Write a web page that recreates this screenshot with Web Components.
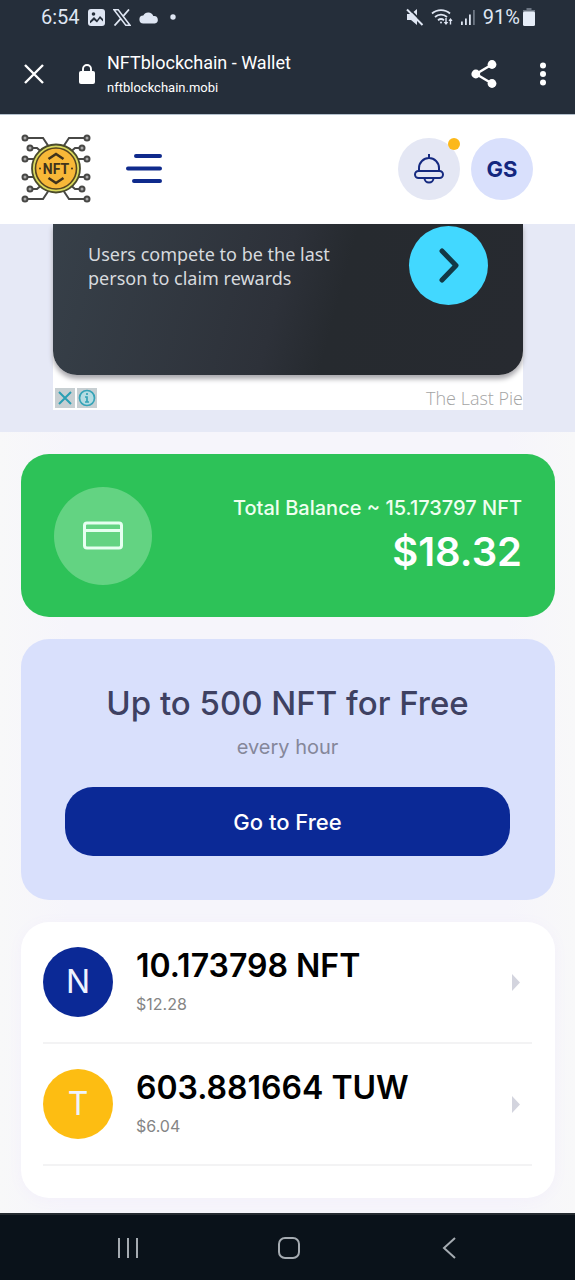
<!DOCTYPE html>
<html lang="en">
<head>
<meta charset="utf-8">
<meta name="viewport" content="width=device-width, initial-scale=1">
<title>NFTblockchain - Wallet</title>
<style>
  html { background: #0a121a; }
  body { margin: 0; font-family: Inter, "Liberation Sans", sans-serif; color: #000; }
</style>
</head>
<body>
<wallet-screen></wallet-screen>
<script>
class BaseElement extends HTMLElement {
  connectedCallback() {
    if (this.shadowRoot) return;
    const root = this.attachShadow({ mode: 'open' });
    root.innerHTML = '<style>*{box-sizing:border-box}svg{display:block;flex:none}button{font:inherit;color:inherit;background:none;border:0;padding:0;margin:0;cursor:pointer}a{color:inherit;text-decoration:none}p,h1,h2,ul{margin:0;padding:0;font-weight:inherit}</style>' + this.view();
  }
}

customElements.define('status-bar', class extends BaseElement {
  view() { return `
    <style>
      :host { display:flex; box-sizing:border-box; align-items:center; height:34px; padding:0 40px 0 41px; background:#252e3a; color:#dfe6f3; font:20px/24px Roboto, sans-serif; }
      .left, .right { display:flex; align-items:center; gap:7px; }
      .left { gap:8px; }
      .right { margin-left:auto; gap:7px; }
      .level { display:flex; align-items:center; gap:3px; }
    </style>
    <div class="left">
      <span>6:54</span>
      <svg width="17" height="17" viewBox="0 0 17 17"><rect width="17" height="17" rx="3" fill="#dfe6f3"/><circle cx="5.500" cy="5" r="1.800" fill="#252e3a"/><path d="M2 12 6 8l3 3 3-4 3 3v4.500H2z" fill="#252e3a"/><path d="M2 14.500 6 11l3 2.500 3-4 3 3v2.500H2z" fill="#dfe6f3"/></svg>
      <svg width="18" height="17" viewBox="0 0 18 17" fill="none" stroke="#dfe6f3"><path d="M1 .8h4.200l11.800 15.400h-4.200z" stroke-width="1.500"/><path d="M16 .5 10 7.300M7.800 9.700 1.500 16.500" stroke-width="1.800"/></svg>
      <svg width="20" height="13" viewBox="0 0 20 13"><path d="M4.500 12.500A4 4 0 0 1 4.300 4.500 5.500 5.500 0 0 1 14.300 5 3.800 3.800 0 0 1 15.700 12.500z" fill="#dfe6f3"/></svg>
      <svg width="12" height="6" viewBox="0 0 12 6"><circle cx="6" cy="3" r="2.700" fill="#dfe6f3"/></svg>
    </div>
    <div class="right">
      <svg width="18" height="18" viewBox="0 0 18 18"><path d="M1 6h4l6-5v16l-6-5H1z" fill="#dfe6f3"/><path d="M3 .5 18 16" stroke="#252e3a" stroke-width="1.800"/><path d="M1 1.500 16.500 17" stroke="#dfe6f3" stroke-width="2"/></svg>
      <svg width="22" height="18" viewBox="0 0 22 18" fill="none" stroke="#dfe6f3" stroke-width="1.800"><path d="M1 5.500a13.500 13.500 0 0 1 18 0M4 9a9 9 0 0 1 12 0M7 12.200a4.800 4.800 0 0 1 6 0"/><circle cx="10" cy="14.500" r="1" fill="#dfe6f3" stroke="none"/><path d="M15 10v6M19.500 16.500V11" stroke-width="1.400"/><path d="m12.700 14 2.300 3 2.300-3zM17.400 13l2.100-3 2.100 3z" fill="#dfe6f3" stroke="none"/></svg>
      <svg width="16" height="18" viewBox="0 0 16 18"><path d="M1 13.500h1.800V17H1zM5 10.500h1.800V17H5zM9 6.500h1.800V17H9z" fill="#dfe6f3"/><path d="M13 2h1.800v15H13z" fill="#6d7683"/></svg>
      <div class="level"><span>91%</span>
      <svg width="12" height="18" viewBox="0 0 12 18"><path d="M3.500 0h5v2H12v3H0V2h3.500z" fill="#6d7683"/><rect y="3.500" width="12" height="14.500" rx="1.500" fill="#e6edf8"/></svg></div>
    </div>`; }
});

customElements.define('browser-bar', class extends BaseElement {
  view() { return `
    <style>
      :host { display:flex; box-sizing:border-box; align-items:center; height:80px; padding:0 24px 0 23px; background:#252e3a; color:#fff; font-family:Roboto, sans-serif; }
      .site { display:flex; align-items:center; gap:12px; margin-left:34px; }
      .title { font-size:18px; line-height:24px; }
      .host { font-size:13px; line-height:26px; }
      .text { padding-top:4px; }
      .actions { display:flex; align-items:center; gap:38px; margin-left:auto; }
    </style>
    <button aria-label="Close"><svg width="22" height="22" viewBox="0 0 22 22"><path d="m2 2 18 18M20 2 2 20" stroke="#fff" stroke-width="2.400"/></svg></button>
    <div class="site">
      <svg width="16" height="20" viewBox="0 0 16 20"><rect y="7" width="16" height="13" rx="2" fill="#fff"/><path d="M4 8V5a4 4 0 0 1 8 0v3" fill="none" stroke="#fff" stroke-width="1.900"/></svg>
      <div class="text"><p class="title">NFTblockchain - Wallet</p><p class="host">nftblockchain.mobi</p></div>
    </div>
    <div class="actions">
      <button aria-label="Share"><svg width="26" height="28" viewBox="0 0 26 28"><path d="M21 4.500 5 14l16 9.500" fill="none" stroke="#fff" stroke-width="2.400"/><g fill="#fff"><circle cx="21" cy="4.500" r="4.400"/><circle cx="4.800" cy="14" r="4.400"/><circle cx="21" cy="23.500" r="4.400"/></g></svg></button>
      <button aria-label="More"><svg width="16" height="24" viewBox="0 0 16 24" fill="#fff"><circle cx="8" cy="3.500" r="3"/><circle cx="8" cy="12" r="3"/><circle cx="8" cy="20.500" r="3"/></svg></button>
    </div>`; }
});

customElements.define('nft-logo', class extends BaseElement {
  view() { return `
    <style>:host{display:block}</style>
    <svg width="70" height="70" viewBox="0 0 70 70" fill="none" role="img" aria-label="NFT">
      <g stroke="#484846" stroke-width="2">
        <path d="M6 4h16l6 9M64 4H48l-6 9M11 14h5l8 7M59 14h-5l-8 7M6 25h10M64 25H54M6 43h10M64 43H54M11 55h5l8-7M59 55h-5l-8-7M6 65h16l6-9M64 65H48l-6-9"/>
        <g fill="#aaa"><circle cx="4" cy="4" r="2.500"/><circle cx="66" cy="4" r="2.500"/><circle cx="9" cy="14" r="2.500"/><circle cx="61" cy="14" r="2.500"/><circle cx="4" cy="25" r="2.500"/><circle cx="66" cy="25" r="2.500"/><circle cx="4" cy="43" r="2.500"/><circle cx="66" cy="43" r="2.500"/><circle cx="9" cy="55" r="2.500"/><circle cx="61" cy="55" r="2.500"/><circle cx="4" cy="65" r="2.500"/><circle cx="66" cy="65" r="2.500"/></g>
      </g>
      <circle cx="35" cy="34.500" r="24" fill="#d9d95c" stroke="#4a4a2c" stroke-width="1.800"/>
      <circle cx="35" cy="34.500" r="20.500" fill="#f8b838" stroke="#57451f" stroke-width="1.600"/>
      <path d="m27.500 25 7.500-5 7.500 5M27.500 44l7.500 5 7.500-5" stroke="#40331c" stroke-width="2.600"/>
      <circle cx="19" cy="34.500" r="1" fill="#40331c"/><circle cx="51" cy="34.500" r="1" fill="#40331c"/>
      <text x="35" y="39.500" text-anchor="middle" font-family="Roboto, sans-serif" font-weight="700" font-size="14" fill="#40331c">NFT</text>
    </svg>`; }
});

customElements.define('app-header', class extends BaseElement {
  view() { return `
    <style>
      :host { display:flex; box-sizing:border-box; align-items:center; height:110px; padding:0 42px 2px 21px; background:#fff; border-top:1px solid #b3c0cc; }
      .menu { margin-left:35px; }
      .actions { display:flex; gap:11px; margin-left:auto; }
      .round { position:relative; display:grid; place-items:center; width:62px; height:62px; border-radius:50%; background:#e4e7f4; }
      .user { background:#d9e0fc; color:#14277f; font-size:22px; line-height:28px; font-weight:700; }
      .badge { position:absolute; top:0; right:0; width:12px; height:12px; border-radius:50%; background:#fcb81a; }
    </style>
    <nft-logo></nft-logo>
    <button class="menu" aria-label="Menu"><svg width="37" height="32" viewBox="0 0 37 32"><path d="M10 3h24M2 15.500h32M8 28h26" stroke="#0f2a8c" stroke-width="4" stroke-linecap="round"/></svg></button>
    <div class="actions">
      <button class="round" aria-label="Notifications"><svg width="30" height="31" viewBox="0 0 30 31" fill="none" stroke="#152a80" stroke-width="2"><path d="M15 1v4M5 18v-3a10 10 0 0 1 20 0v3"/><rect x="1" y="18" width="28" height="7" rx="3.500"/><path d="M10.500 25a4.500 4.500 0 0 0 9 0"/></svg><span class="badge"></span></button>
      <button class="round user">GS</button>
    </div>`; }
});

customElements.define('ad-banner', class extends BaseElement {
  view() { return `
    <style>
      :host { display:block; padding:0 52px 22px 53px; background:#e6e9f6; font-family:"Noto Sans", sans-serif; }
      .frame { background:#fff; }
      .creative { display:flex; justify-content:space-between; height:151px; padding:2px 35px 0 35px; border-radius:0 0 24px 24px; background:linear-gradient(105deg,#374049 0%,#2d3139 48%,#262a2f 60%,#272a30 100%); box-shadow:0 4px 5px #aaa9ae; color:#d7dade; }
      .creative p { width:270px; padding-top:16px; font-size:18px; line-height:24px; }
      .go { display:grid; place-items:center; width:79px; height:79px; border-radius:50%; background:#42d8ff; }
      .foot { display:flex; align-items:center; height:35px; padding:11px 0 0 2px; gap:2px; }
      .foot button { display:grid; place-items:center; width:20px; height:20px; background:#c7cfd2; }
      .brand { margin-left:auto; font:300 18px/22px "Open Sans", sans-serif; color:#a4a4a4; }
    </style>
    <div class="frame">
      <div class="creative"><p>Users compete to be the last person to claim rewards</p>
        <button class="go" aria-label="Open"><svg width="24" height="36" viewBox="0 0 24 36"><path d="m5 3 14 14.500L5 32" fill="none" stroke="#123946" stroke-width="5" stroke-linecap="round" stroke-linejoin="round"/></svg></button></div>
      <div class="foot">
        <button aria-label="Close ad"><svg width="14" height="14" viewBox="0 0 14 14"><path d="m1 1 12 12M13 1 1 13" stroke="#2a9fb4" stroke-width="2"/></svg></button>
        <button aria-label="Ad information"><svg width="18" height="18" viewBox="0 0 18 18" fill="none" stroke="#35a3b7" stroke-width="1.700"><circle cx="9" cy="9" r="7.500" fill="#b5dce2"/><path d="M9 4v2M7 8h2v5M7 13h4"/></svg></button>
        <span class="brand">The Last Pie</span>
      </div>
    </div>`; }
});

customElements.define('balance-card', class extends BaseElement {
  view() { return `
    <style>
      :host { display:flex; box-sizing:border-box; align-items:center; justify-content:space-between; height:163px; padding:0 33px; border-radius:28px; background:#2dc258; color:#fff; }
      .icon { display:grid; place-items:center; width:98px; height:98px; border-radius:50%; background:#63d382; }
      .text { text-align:right; padding-top:4px; }
      .label { font:500 20px/28px Inter, sans-serif; color:#effff0; }
      .total { font:600 40px/60px Inter, sans-serif; }
    </style>
    <div class="icon"><svg width="40" height="30" viewBox="0 0 40 30" fill="none" stroke="#e6fff0" stroke-width="3"><rect x="1.500" y="2" width="37" height="25" rx="2.500"/><path d="M3 9.500h34"/></svg></div>
    <div class="text"><p class="label"><slot name="label"></slot></p><p class="total"><slot></slot></p></div>`; }
});

customElements.define('promo-card', class extends BaseElement {
  view() { return `
    <style>
      :host { display:block; padding:42px 45px 44px 44px; border-radius:28px; background:#d9e0fc; text-align:center; }
      h1 { font:500 33px/44px Inter, sans-serif; color:#3e4162; }
      p { font:400 20px/28px Inter, sans-serif; color:#85879a; padding:8px 0 26px; }
      button { display:block; width:100%; height:69px; border-radius:28px; background:#0b2996; color:#fff; font:500 22px/28px Inter, sans-serif; }
    </style>
    <h1><slot name="title"></slot></h1><p><slot name="note"></slot></p><button><slot></slot></button>`; }
});

customElements.define('token-row', class extends BaseElement {
  view() { return `
    <style>
      :host { display:block; border-bottom:2px solid #f3f3f4; }
      a { display:flex; align-items:center; height:120px; padding-right:12px; }
      .coin { display:grid; place-items:center; width:70px; height:70px; margin-right:23px; border-radius:50%; background:var(--coin); color:#eef3ff; font:400 32px/40px Inter, sans-serif; }
      .text { flex:1; padding-bottom:4px; }
      .amount { font:600 32px/44px Inter, sans-serif; }
      .value { font:400 16px/24px Inter, sans-serif; color:#858585; padding-top:4px; }
    </style>
    <a href="#"><span class="coin"><slot name="letter"></slot></span>
      <div class="text"><p class="amount"><slot></slot></p><p class="value"><slot name="value"></slot></p></div>
      <svg width="8" height="17" viewBox="0 0 8 17"><path d="m0 0 8 8.500L0 17z" fill="#d3d4de"/></svg></a>`; }
});

customElements.define('token-list', class extends BaseElement {
  view() { return `
    <style>:host { display:block; padding:0 23px 32px 22px; border-radius:28px; background:#fff; box-shadow:0 2px 14px #f3f0fa; }</style>
    <slot></slot>`; }
});

customElements.define('system-nav', class extends BaseElement {
  view() { return `
    <style>
      :host { display:flex; box-sizing:border-box; align-items:center; justify-content:space-between; height:67px; padding:0 111px 0 114px; background:#0a121a; border-top:2px solid #252b31; }
    </style>
    <button aria-label="Recent apps"><svg width="28" height="24" viewBox="0 0 28 24"><path d="M5 2v20M14 2v20M23 2v20" stroke="#a5abb1" stroke-width="2"/></svg></button>
    <button aria-label="Home"><svg width="28" height="24" viewBox="0 0 28 24"><rect x="4" y="2" width="20" height="20" rx="6" fill="none" stroke="#a5abb1" stroke-width="2"/></svg></button>
    <button aria-label="Back"><svg width="28" height="24" viewBox="0 0 28 24"><path d="M19 2 8 12l11 10" fill="none" stroke="#a5abb1" stroke-width="2"/></svg></button>`; }
});

customElements.define('wallet-screen', class extends BaseElement {
  view() { return `
    <style>
      :host { display:flex; flex-direction:column; min-height:100vh; }
      main { flex:1; display:flex; flex-direction:column; gap:22px; padding:22px 20px 15px 21px; background:linear-gradient(90deg,#f8f8f9,#f6f5fb 12%,#f6f5fb 88%,#f8f8f9); }
    </style>
    <status-bar></status-bar>
    <browser-bar></browser-bar>
    <app-header></app-header>
    <ad-banner></ad-banner>
    <main>
      <balance-card><span slot="label">Total Balance ~ 15.173797 NFT</span>$18.32</balance-card>
      <promo-card><span slot="title">Up to 500 NFT for Free</span><span slot="note">every hour</span>Go to Free</promo-card>
      <token-list>
        <token-row style="--coin:#0b2996"><span slot="letter">N</span>10.173798 NFT<span slot="value">$12.28</span></token-row>
        <token-row style="--coin:#fdbd12"><span slot="letter">T</span>603.881664 TUW<span slot="value">$6.04</span></token-row>
      </token-list>
    </main>
    <system-nav></system-nav>`; }
});
</script>
</body>
</html>
